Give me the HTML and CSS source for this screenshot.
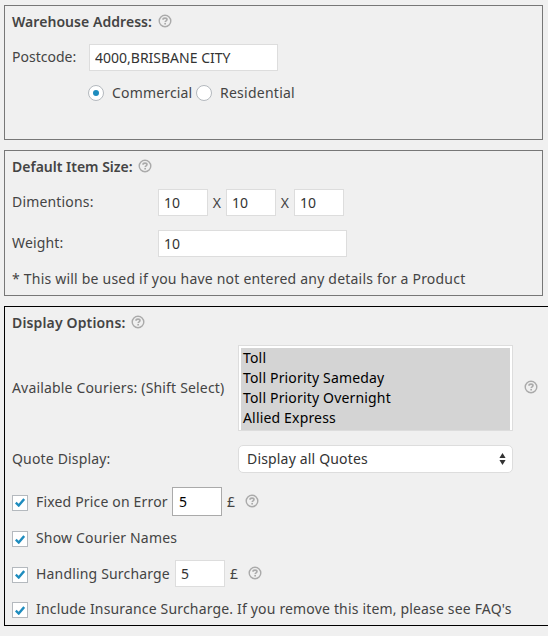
FILE: index.html
```html
<!DOCTYPE html>
<html lang="en">
<head>
<meta charset="utf-8">
<title>Shipping settings</title>
<link rel="stylesheet" href="styles.css">
</head>
<body>
<svg class="defs" width="0" height="0" aria-hidden="true">
  <symbol id="help" viewBox="0 0 14 14">
    <circle cx="7" cy="7" r="5.8" fill="none" stroke="currentColor" stroke-width="1.4"/>
    <path d="M5 5.7C5 4.6 5.9 4.1 7 4.1s2 .5 2 1.5c0 1.2-1.8 1.2-1.8 2.5" fill="none" stroke="currentColor" stroke-width="1.6"/>
    <rect x="6.3" y="8.9" width="1.7" height="1.6" fill="currentColor"/>
  </symbol>
</svg>
<section class="box warehouse">
  <div class="row title"><h2 class="t-warehouse">Warehouse Address:</h2><svg class="help"><use href="#help"/></svg></div>
  <div class="row postcode"><label class="label-narrow">Postcode:</label><input class="field wide" type="text" value="4000,BRISBANE CITY"></div>
  <div class="row radios">
    <input class="radio" type="radio" name="kind" checked><label class="r-first">Commercial</label>
    <input class="radio" type="radio" name="kind"><label class="r-second">Residential</label>
  </div>
</section>
<section class="box item-size">
  <div class="row title"><h2 class="t-size">Default Item Size:</h2><svg class="help"><use href="#help"/></svg></div>
  <div class="row dims"><label class="label-mid">Dimentions:</label><input class="field small" type="text" value="10"><span class="times">X</span><input class="field small" type="text" value="10"><span class="times">X</span><input class="field small" type="text" value="10"></div>
  <div class="row weight"><label class="label-mid">Weight:</label><input class="field wide" type="text" value="10"></div>
  <p class="row note">* This will be used if you have not entered any details for a Product</p>
</section>
<section class="box display">
  <div class="row title"><h2 class="t-display">Display Options:</h2><svg class="help"><use href="#help"/></svg></div>
  <div class="row couriers">
    <label class="label-wide">Available Couriers: (Shift Select)</label>
    <ul class="listbox">
      <li>Toll</li>
      <li>Toll Priority Sameday</li>
      <li>Toll Priority Overnight</li>
      <li>Allied Express</li>
    </ul>
    <svg class="help"><use href="#help"/></svg>
  </div>
  <div class="row quote">
    <label class="label-wide">Quote Display:</label>
    <div class="select"><span>Display all Quotes</span><svg class="arrows" viewBox="0 0 7 12"><path d="M3.5 0 6.6 5H.4zM3.5 12 .4 7h6.2z" fill="#333"/></svg></div>
  </div>
  <div class="row check fixed">
    <span class="checkbox"><svg viewBox="0 0 10 9"><path d="M.8 4.7 3.7 7.5 9.2 1" /></svg></span><label class="l-fixed">Fixed Price on Error</label><input class="field small hover" type="text" value="5"><span class="pound">£</span><svg class="help"><use href="#help"/></svg>
  </div>
  <div class="row check names">
    <span class="checkbox"><svg viewBox="0 0 10 9"><path d="M.8 4.7 3.7 7.5 9.2 1" /></svg></span><label>Show Courier Names</label>
  </div>
  <div class="row check handling">
    <span class="checkbox"><svg viewBox="0 0 10 9"><path d="M.8 4.7 3.7 7.5 9.2 1" /></svg></span><label class="l-handling">Handling Surcharge</label><input class="field small" type="text" value="5"><span class="pound">£</span><svg class="help"><use href="#help"/></svg>
  </div>
  <div class="row check insurance">
    <span class="checkbox"><svg viewBox="0 0 10 9"><path d="M.8 4.7 3.7 7.5 9.2 1" /></svg></span><label>Include Insurance Surcharge. If you remove this item, please see FAQ's</label>
  </div>
</section>
</body>
</html>
```
FILE: styles.css
```css
* { box-sizing: border-box; }
body {
  margin: 0;
  padding: 5px 4px 0;
  height: 636px;
  overflow: hidden;
  background: #f0f0f0;
  color: #444;
  font: 14px/20px "Noto Sans", "Open Sans", sans-serif;
  letter-spacing: .17px;
}
.defs { position: absolute; }
.box { width: 539px; border: 1px solid #777; padding: 0 7px; margin-bottom: 10px; }
.warehouse { height: 135px; }
.item-size { height: 146px; }
.display { width: 560px; height: 320px; border-color: #000; }
.row { display: flex; align-items: center; white-space: nowrap; margin: 0; }
.title { height: 32px; }
h2 { margin: 0; font-size: 14px; line-height: 20px; font-weight: 600; letter-spacing: .05px; flex: none; }
.t-warehouse { width: 146px; }
.t-size { width: 126px; letter-spacing: 0; }
.t-display { width: 119px; letter-spacing: .15px; }
.help { width: 14px; height: 14px; color: #aaa; flex: none; margin-top: -2px; }
.field {
  height: 27px;
  border: 1px solid #ddd;
  border-radius: 0;
  background: #fff;
  color: #333;
  font: 14px/20px "Noto Sans", "Open Sans", sans-serif;
  letter-spacing: 0;
  padding: 0 5px;
  margin: 0;
  flex: none;
  outline: none;
}
.wide { width: 189px; }
.small { width: 50px; }
.hover { height: 29px; border-color: #aaa; color: #000; padding-left: 6px; }
.label-narrow { width: 77px; letter-spacing: 0; flex: none; }
.label-mid { width: 146px; flex: none; }
.label-wide { width: 226px; flex: none; }
.label-narrow, .label-mid { margin-top: -2px; }
.postcode { height: 27px; margin-top: 6px; }
.radios { height: 20px; margin: 12px 0 0 76px; }
.radio {
  appearance: none;
  display: grid;
  place-items: center;
  width: 16px;
  height: 16px;
  margin: 0 8px 0 0;
  border: 1px solid #b4b9be;
  border-radius: 50%;
  background: #fff;
}
.radio:checked::before { content: ""; width: 6px; height: 6px; border-radius: 50%; background: #1e8cbe; }
.r-first { width: 84px; }
.r-second { letter-spacing: .25px; }
.dims { height: 27px; margin-top: 6px; }
.times { width: 18px; text-align: center; }
.weight { height: 27px; margin-top: 14px; }
.note { height: 20px; margin-top: 12px; letter-spacing: .21px; }
.couriers { height: 86px; margin-top: 6px; }
.couriers .help { margin-left: 11px; }
.listbox { width: 275px; height: 86px; margin: 0; padding: 2px 2px 0; border: 1px solid #ddd; background: #fff; list-style: none; color: #000; flex: none; }
.listbox li { height: 20px; line-height: 20px; padding-left: 2px; background: #d4d4d4; }
.listbox li:last-child { height: 22px; }
.quote { height: 28px; margin-top: 14px; }
.select { display: flex; align-items: center; justify-content: space-between; width: 275px; height: 28px; padding: 0 6px 0 8px; border: 1px solid #ddd; border-radius: 5px; background: #fff; color: #333; }
.arrows { width: 7px; height: 12px; }
.checkbox { display: grid; place-items: center; width: 16px; height: 16px; margin: 2px 8px 0 0; border: 1px solid #b4b9be; background: #fff; flex: none; }
.checkbox svg { width: 10px; height: 9px; }
.checkbox path { fill: none; stroke: #1e8cbe; stroke-width: 2.4; }
.fixed { height: 29px; margin-top: 14px; }
.l-fixed { width: 136px; }
.l-handling { width: 139px; }
.pound { width: 23px; padding-left: 5px; }
.names { height: 20px; margin-top: 12px; }
.handling { height: 27px; margin-top: 12px; }
.insurance { height: 20px; margin-top: 12px; }
```
